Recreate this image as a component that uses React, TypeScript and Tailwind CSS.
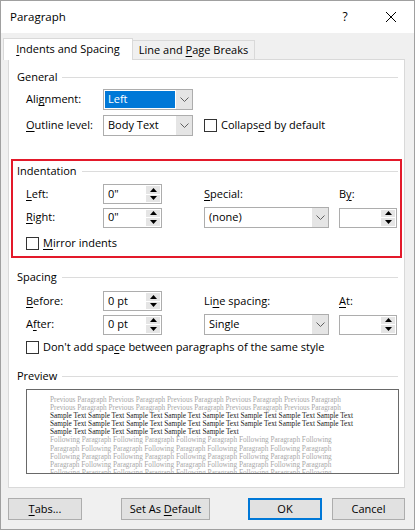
import React from "react";

const ui = { fontFamily: '"Segoe UI", "Open Sans", sans-serif' };

// underlined access-key letter
function K({ c }: { c: string }) {
  return <span className="underline decoration-1 underline-offset-[2px]">{c}</span>;
}

function Chevron() {
  return (
    <svg width="9" height="5" viewBox="0 0 9 5">
      <path d="M0.5 0.5 L4.5 4.5 L8.5 0.5" fill="none" stroke="#606060" strokeWidth="1" />
    </svg>
  );
}

function Combo({ value, selected, w }: { value: string; selected?: boolean; w: string }) {
  return (
    <div className={`flex h-[21px] border border-[#adadad] bg-white ${w}`}>
      <div className="flex flex-1 p-[1px]">
        <div className={`flex flex-1 items-center pl-[3px] ${selected ? "bg-[#0078d7] text-white" : ""}`}>{value}</div>
      </div>
      <div className="flex w-[16px] items-center justify-center bg-[#e5e5e5]">
        <Chevron />
      </div>
    </div>
  );
}

function Spin({ value, w }: { value?: string; w: string }) {
  return (
    <div className={`flex h-[20px] border border-[#adadad] bg-white ${w}`}>
      <div className="flex flex-1 items-center pl-[4px]">{value}</div>
      <div className="flex w-[15px] flex-col gap-px py-[1px] pr-[1px]">
        <div className="flex flex-1 items-center justify-center bg-[#e5e5e5]">
          <svg width="7" height="4" viewBox="0 0 7 4"><path d="M0 4 L3.5 0 L7 4 Z" fill="#000" /></svg>
        </div>
        <div className="flex flex-1 items-center justify-center bg-[#e5e5e5]">
          <svg width="7" height="4" viewBox="0 0 7 4"><path d="M0 0 L3.5 4 L7 0 Z" fill="#000" /></svg>
        </div>
      </div>
    </div>
  );
}

function Check({ children }: { children: React.ReactNode }) {
  return (
    <div className="flex h-[13px] items-center">
      <div className="h-[13px] w-[13px] border border-[#333] bg-white" />
      <span className="ml-[4px]">{children}</span>
    </div>
  );
}

function Header({ title, cls }: { title: string; cls: string }) {
  return (
    <div className={`flex h-[16px] items-center ${cls}`}>
      <span>{title}</span>
      <div className="ml-[5px] h-px flex-1 bg-[#dcdcdc]" />
    </div>
  );
}

function Btn({ children, w, ml, def }: { children: React.ReactNode; w: string; ml: string; def?: boolean }) {
  return (
    <div
      className={`flex h-[22px] items-center justify-center bg-[#e1e1e1] ${w} ${ml} ${
        def ? "border-2 border-[#0078d7]" : "border border-[#adadad]"
      }`}
    >
      {children}
    </div>
  );
}

const prev = "Previous Paragraph Previous Paragraph Previous Paragraph Previous Paragraph Previous Paragraph";
const sample8 = Array(8).fill("Sample Text").join(" ");
const sample5 = Array(5).fill("Sample Text").join(" ");
const follA = "Following Paragraph Following Paragraph Following Paragraph Following Paragraph Following";
const follB = "Paragraph Following Paragraph Following Paragraph Following Paragraph Following Paragraph";

const previewLines: [string, boolean][] = [
  [prev, false],
  [prev, false],
  [sample8, true],
  [sample8, true],
  [sample5, true],
  [follA, false],
  [follB, false],
  [follA, false],
  [follB, false],
  [follA, false],
];

export default function App() {
  return (
    <div style={ui} className="flex h-[530px] w-[415px] flex-col border border-[#a0a0a0] bg-[#f0f0f0] text-[11px] text-black">
      {/* title bar */}
      <div className="flex h-[32px] items-center bg-white">
        <span className="ml-[9px] text-[11.5px]">Paragraph</span>
        <div className="ml-auto flex h-full w-[46px] items-center justify-center text-[12px]">?</div>
        <div className="flex h-full w-[46px] items-center justify-center">
          <svg width="10" height="10" viewBox="0 0 10 10">
            <path d="M0 0 L10 10 M10 0 L0 10" stroke="#000" strokeWidth="1" />
          </svg>
        </div>
      </div>

      {/* tabs */}
      <div className="mt-[5px] flex items-end pl-[2px]">
        <div className="relative z-10 -mb-px flex h-[22px] w-[130px] items-center justify-center border border-b-0 border-[#d9d9d9] bg-white">
          <span>
            <K c="I" />ndents and Spacing
          </span>
        </div>
        <div className="flex h-[19px] w-[122px] items-center justify-center border border-b-0 border-l-0 border-[#d9d9d9] bg-[#f0f0f0]">
          <span>
            Line and <K c="P" />age Breaks
          </span>
        </div>
      </div>

      {/* tab page */}
      <div className="ml-[7px] flex h-[429px] w-[397px] flex-col border border-[#d9d9d9] bg-white">
        <Header title="General" cls="mt-[9px] pl-[8px] pr-[6px]" />
        <div className="mt-[4px] flex items-center pl-[17px]">
          <div className="w-[77px]">
            Ali<K c="g" />nment:
          </div>
          <Combo value="Left" selected w="w-[90px]" />
        </div>
        <div className="mt-[5px] flex items-center pl-[17px]">
          <div className="w-[77px]">
            <K c="O" />utline level:
          </div>
          <Combo value="Body Text" w="w-[90px]" />
          <div className="ml-[11px]">
            <Check>
              Collaps<K c="e" />d by default
            </Check>
          </div>
        </div>

        {/* indentation, outlined in red */}
        <div className="mx-[2px] mt-[23px] flex h-[99px] flex-col border-2 border-[#e3192a]">
          <Header title="Indentation" cls="mt-[2px] pl-[4px] pr-[2px]" />
          <div className="mt-[5px] flex h-[20px] items-center pl-[13px]">
            <div className="w-[77px]">
              <K c="L" />eft:
            </div>
            <Spin value={'0"'} w="w-[59px]" />
            <div className="ml-[42px] w-[135px]">
              <K c="S" />pecial:
            </div>
            <div>
              B<K c="y" />:
            </div>
          </div>
          <div className="mt-[3px] flex h-[21px] items-center pl-[13px]">
            <div className="w-[77px]">
              <K c="R" />ight:
            </div>
            <Spin value={'0"'} w="w-[59px]" />
            <div className="ml-[42px]">
              <Combo value="(none)" w="w-[125px]" />
            </div>
            <div className="ml-[10px]">
              <Spin w="w-[58px]" />
            </div>
          </div>
          <div className="mt-[9px] pl-[13px]">
            <Check>
              <K c="M" />irror indents
            </Check>
          </div>
        </div>

        <Header title="Spacing" cls="mt-[11px] pl-[8px] pr-[6px]" />
        <div className="mt-[6px] flex h-[20px] items-center pl-[17px]">
          <div className="w-[77px]">
            <K c="B" />efore:
          </div>
          <Spin value="0 pt" w="w-[59px]" />
          <div className="ml-[42px] w-[135px]">
            Li<K c="n" />e spacing:
          </div>
          <div>
            <K c="A" />t:
          </div>
        </div>
        <div className="mt-[3px] flex h-[21px] items-center pl-[17px]">
          <div className="w-[77px]">
            A<K c="f" />ter:
          </div>
          <Spin value="0 pt" w="w-[59px]" />
          <div className="ml-[42px]">
            <Combo value="Single" w="w-[125px]" />
          </div>
          <div className="ml-[10px]">
            <Spin w="w-[58px]" />
          </div>
        </div>
        <div className="mt-[6px] pl-[17px]">
          <Check>
            Don't add spa<K c="c" />e between paragraphs of the same style
          </Check>
        </div>

        <Header title="Preview" cls="mt-[14px] pl-[8px] pr-[6px]" />
        <div className="ml-[17px] mt-[5px] h-[85px] w-[373px] overflow-hidden border border-[#696969] bg-white pl-[23px] pt-[6px]">
          {previewLines.map(([t, dark], i) => (
            <div
              key={i}
              style={{ fontFamily: '"Liberation Serif", "Times New Roman", serif' }}
              className={`whitespace-nowrap text-[7.27px] leading-[8.1px] ${dark ? "text-[#1a1a1a]" : "text-[#a8a8a8]"}`}
            >
              {t}
            </div>
          ))}
        </div>
      </div>

      {/* buttons */}
      <div className="mt-[10px] flex">
        <Btn w="w-[74px]" ml="ml-[7px]">
          <span>
            <K c="T" />abs...
          </span>
        </Btn>
        <Btn w="w-[89px]" ml="ml-[39px]">
          <span>
            Set As <K c="D" />efault
          </span>
        </Btn>
        <Btn w="w-[74px]" ml="ml-[38px]" def>
          OK
        </Btn>
        <Btn w="w-[73px]" ml="ml-[10px]">
          Cancel
        </Btn>
      </div>
    </div>
  );
}
